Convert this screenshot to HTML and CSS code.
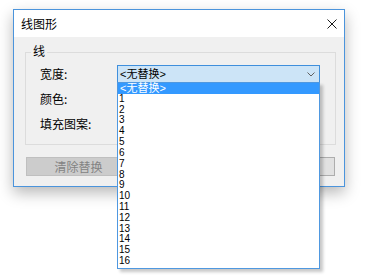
FILE: index.html
```html
<!DOCTYPE html>
<html lang="zh-CN">
<head>
<meta charset="utf-8">
<title>线图形</title>
<link rel="stylesheet" href="styles.css">
</head>
<body>
<div class="page">
<div class="dialog">
  <div class="titlebar">
    <span class="title">线图形</span>
    <svg class="close" width="10" height="10" viewBox="0 0 10 10"><path d="M0.5 0.5L9.5 9.5M9.5 0.5L0.5 9.5" stroke="#1a1a1a" stroke-width="1" fill="none"/></svg>
  </div>
  <div class="body">
    <div class="group">
      <span class="legend">线</span>
      <div class="row">
        <span class="label">宽度:</span>
        <div class="combo open">
          <span class="combo-text">&lt;无替换&gt;</span>
          <svg class="chevron" width="8" height="5" viewBox="0 0 8 5"><path d="M0.5 0.5L4 4L7.5 0.5" stroke="#606060" stroke-width="1" fill="none"/></svg>
          <ul class="list">
            <li class="item selected">&lt;无替换&gt;</li>
            <li class="item">1</li>
            <li class="item">2</li>
            <li class="item">3</li>
            <li class="item">4</li>
            <li class="item">5</li>
            <li class="item">6</li>
            <li class="item">7</li>
            <li class="item">8</li>
            <li class="item">9</li>
            <li class="item">10</li>
            <li class="item">11</li>
            <li class="item">12</li>
            <li class="item">13</li>
            <li class="item">14</li>
            <li class="item">15</li>
            <li class="item">16</li>
          </ul>
        </div>
      </div>
      <div class="row">
        <span class="label">颜色:</span>
        <div class="combo"></div>
      </div>
      <div class="row">
        <span class="label">填充图案:</span>
        <div class="combo"></div>
      </div>
    </div>
    <div class="buttons">
      <button class="btn disabled">清除替换</button>
      <button class="btn">确定</button>
    </div>
  </div>
</div>
</div>
</body>
</html>
```

FILE: styles.css
```css
html, body {
  margin: 0;
  padding: 0;
  background: #ffffff;
}

html, body {
  min-height: 279px;
}

body {
  font-family: "Noto Sans CJK SC", "Liberation Sans", sans-serif;
  font-size: 12px;
  color: #000;
}

.page {
  min-height: 279px;
  padding: 9px 0 0 13px;
  box-sizing: border-box;
}

.dialog {
  box-sizing: border-box;
  width: 332px;
  border: 1px solid #4b94dc;
  background: #f0f0f0;
  box-shadow: 0 6px 14px rgba(0, 0, 0, 0.28);
}

.titlebar {
  height: 27px;
  background: #ffffff;
  display: flex;
  align-items: center;
  justify-content: space-between;
  padding-left: 7px;
}

.title {
  font-size: 12px;
  line-height: 14px;
  color: #000;
}

.close {
  display: block;
  margin-right: 7px;
}

.body {
  padding: 15px 8px 10px 11px;
}

.group {
  position: relative;
  border: 1px solid #dcdcdc;
  padding: 12px 15px 11px 14px;
  display: flex;
  flex-direction: column;
  gap: 7px;
}

.legend {
  position: absolute;
  left: 5px;
  top: -10px;
  padding: 0 2px;
  background: #f0f0f0;
  line-height: 16px;
  font-size: 12px;
}

.row {
  display: flex;
  align-items: center;
  height: 18px;
}

.label {
  width: 77px;
  font-size: 12px;
  line-height: 14px;
}

.combo {
  position: relative;
  box-sizing: border-box;
  width: 203px;
  height: 18px;
  border: 1px solid #adadad;
  background: #e1e1e1;
  display: flex;
  align-items: center;
  justify-content: space-between;
}

.combo.open {
  border-color: #3f8fdc;
  background: #cce4f7;
}

.combo-text {
  padding-left: 2px;
  font-family: "Liberation Sans", "Noto Sans CJK SC", sans-serif;
  font-size: 11px;
  line-height: 14px;
}

.chevron {
  display: block;
  margin-right: 4px;
}

.list {
  position: absolute;
  left: -1px;
  top: 100%;
  box-sizing: border-box;
  width: 203px;
  margin: 0;
  padding: 0 0 1px 0;
  list-style: none;
  background: #ffffff;
  border: 1px solid #4f98e0;
  box-shadow: 3px 3px 3px rgba(0, 0, 0, 0.22);
  z-index: 2;
}

.item {
  height: 10.82px;
  line-height: 10.82px;
  padding-left: 1px;
  font-family: "Liberation Sans", "Noto Sans CJK SC", sans-serif;
  font-size: 10px;
  color: #000;
  white-space: nowrap;
}

.item.selected {
  background: #3399ff;
  color: #ffffff;
  font-size: 11px;
  padding-left: 2px;
}

.buttons {
  margin-top: 12px;
  padding: 0 1px;
  display: flex;
  justify-content: space-between;
}

.btn {
  box-sizing: border-box;
  width: 105px;
  height: 19px;
  margin: 0;
  padding: 0;
  border: 1px solid #adadad;
  background: #e1e1e1;
  font-family: "Noto Sans CJK SC", "Liberation Sans", sans-serif;
  font-size: 12px;
  line-height: 15px;
  color: #000;
}

.btn.disabled {
  border-color: #bfbfbf;
  background: #cccccc;
  color: #838383;
}
```
